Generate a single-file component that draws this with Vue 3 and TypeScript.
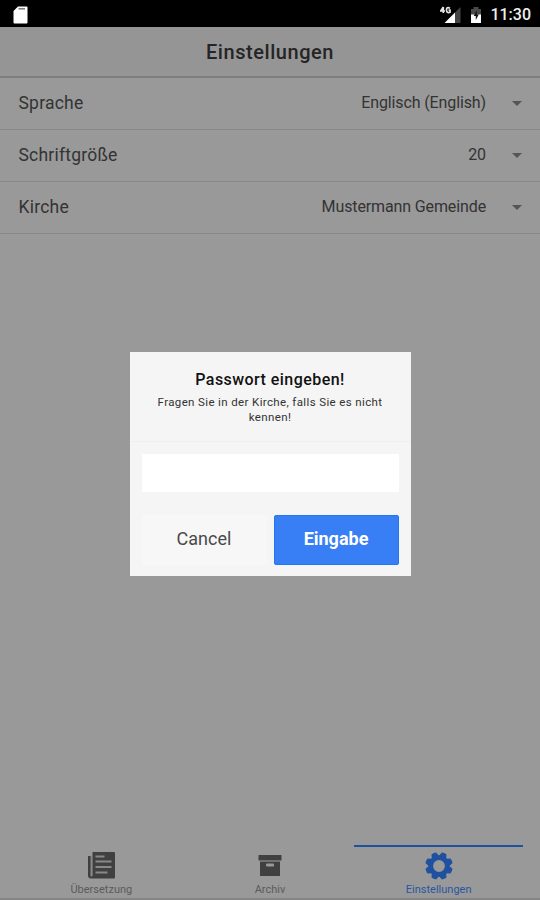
<script setup lang="ts">
interface Setting {
  label: string
  value: string
}

const settings: Setting[] = [
  { label: 'Sprache', value: 'Englisch (English)' },
  { label: 'Schriftgröße', value: '20' },
  { label: 'Kirche', value: 'Mustermann Gemeinde' },
]

const teeth: number[] = Array.from({ length: 8 }, (_, i) => 22.5 + i * 45)
</script>

<template>
  <div class="screen">
    <div class="status">
      <svg class="sd" width="15" height="18" viewBox="0 0 15 18">
        <path d="M5 .5h8.500q1 0 1 1v15q0 1-1 1h-12q-1 0-1-1V5z" fill="#fff" />
        <path d="M5.500 2.800h6.500" stroke="#777" stroke-width="1.500" />
      </svg>
      <div class="status-right">
        <svg width="22" height="18" viewBox="0 0 22 18">
          <path d="M20.500 1v16H15V6.500z" fill="#444" />
          <path d="M15 6.500V17H4.500z" fill="#fff" />
          <path d="M3.300 1v6M3.300 1 .7 5h4.300M10 2.200Q6.500.6 6.500 4T10 6.300V4H8.500" fill="none" stroke="#e4e4e4" stroke-width="1.700" />
        </svg>
        <svg class="battery" width="12" height="18" viewBox="0 0 12 18">
          <path d="M3.500 1h5v2H11v6H1V3h2.500z" fill="#4a4a4a" />
          <path d="M1 8.500h10V17H1z" fill="#fff" />
          <path d="M6.800 4.500 3.700 10h2.100v4l3-5.500h-2z" fill="#111" />
        </svg>
        <span class="clock">11:30</span>
      </div>
    </div>

    <header class="header"><h1>Einstellungen</h1></header>

    <main class="content">
      <div v-for="item in settings" :key="item.label" class="row">
        <span class="label">{{ item.label }}</span>
        <span class="value">{{ item.value }}</span>
        <span class="caret"></span>
      </div>
    </main>

    <nav class="tabs">
      <div class="tab">
        <svg width="28" height="28" viewBox="0 0 28 28">
          <path d="M5.500 0H27q1 0 1 1v24.500q0 1-1 1H4q-3 0-3-3V4h3v20h1.500z" fill="#404040" />
          <path d="M4.200 4v20.500" stroke="#888" stroke-width="1.300" />
          <path d="M8.500 4.500h9M8.500 9.500h16M8.500 15h16M8.500 20.500h12" stroke="#888" stroke-width="1.800" />
        </svg>
        <span>Übersetzung</span>
      </div>
      <div class="tab">
        <svg width="24" height="28" viewBox="0 0 24 28">
          <path d="M.5 3h23v5.500H.5z" fill="#404040" />
          <path d="M2 9.500h20V24H2z" fill="#404040" />
          <path d="M2 9h20" stroke="#777" stroke-width="1" />
          <rect x="8" y="11.500" width="8" height="3" rx="1" fill="#999" />
        </svg>
        <span>Archiv</span>
      </div>
      <div class="tab active">
        <svg width="28" height="28" viewBox="-14 -14 28 28">
          <circle r="8.300" fill="none" stroke="#1f51a0" stroke-width="4.800" />
          <path
            v-for="angle in teeth"
            :key="angle"
            d="M-3.900-9.500-2.500-13.500Q0-14.300 2.500-13.500L3.900-9.500z"
            :transform="`rotate(${angle})`"
            fill="#1f51a0"
          />
        </svg>
        <span>Einstellungen</span>
      </div>
    </nav>

    <div class="overlay">
      <section class="popup">
        <div class="popup-head">
          <h3>Passwort eingeben!</h3>
          <p>Fragen Sie in der Kirche, falls Sie es nicht kennen!</p>
        </div>
        <div class="popup-body"><input type="password" /></div>
        <div class="popup-buttons">
          <button class="cancel">Cancel</button>
          <button class="submit">Eingabe</button>
        </div>
      </section>
    </div>
  </div>
</template>

<style>
body {
  margin: 0;
}
</style>

<style scoped>
.screen {
  position: relative;
  box-sizing: border-box;
  width: 540px;
  height: 900px;
  display: flex;
  flex-direction: column;
  overflow: hidden;
  background: #999;
  border-bottom: 2px solid #858585;
  font-family: Roboto, sans-serif;
  color: #333;
}
.status {
  height: 27px;
  flex: none;
  box-sizing: border-box;
  padding: 2px 9px 0 13px;
  display: flex;
  align-items: center;
  justify-content: space-between;
  background: #000;
}
.status-right {
  display: flex;
  align-items: center;
}
.battery {
  margin: 0 8px 0 8px;
}
.clock {
  color: #eee;
  font-size: 16px;
  font-weight: 500;
  line-height: 20px;
}
.header {
  height: 51px;
  flex: none;
  box-sizing: border-box;
  border-bottom: 2px solid #7e7e7e;
  background: #959595;
  display: flex;
  align-items: center;
  justify-content: center;
}
h1 {
  margin: 0;
  font-size: 20px;
  font-weight: 500;
  letter-spacing: 0.55px;
  color: #252525;
}
.content {
  flex: 1;
}
.row {
  height: 52px;
  box-sizing: border-box;
  border-bottom: 1px solid #888;
  padding: 0 18px 0 18.500px;
  display: flex;
  align-items: center;
}
.label {
  flex: 1;
  font-size: 17.500px;
  letter-spacing: 0.22px;
  padding-bottom: 1px;
}
.value {
  font-size: 16px;
  letter-spacing: -0.12px;
  padding-bottom: 3px;
}
.caret {
  margin-left: 26px;
  border: 5px solid transparent;
  border-top: 5px solid #555;
  border-bottom: 0;
}
.tabs {
  flex: none;
  height: 53px;
  padding: 0 17px;
  display: flex;
}
.tab {
  flex: 1;
  box-sizing: border-box;
  border-top: 2px solid transparent;
  padding-top: 5px;
  display: flex;
  flex-direction: column;
  align-items: center;
  font-size: 11px;
  line-height: 13px;
  color: #5b5b5b;
}
.tab span {
  margin-top: 3px;
}
.tab.active {
  border-color: #1f51a0;
  color: #2b56a0;
}
.overlay {
  position: absolute;
  inset: 0;
  display: flex;
  align-items: flex-start;
  justify-content: center;
  padding-top: 352px;
}
.popup {
  width: 281px;
  height: 224px;
  background: #f5f5f5;
  display: flex;
  flex-direction: column;
}
.popup-head {
  height: 90px;
  box-sizing: border-box;
  border-bottom: 1px solid #efefef;
  padding: 18px 22px 0;
  text-align: center;
}
h3 {
  margin: 0;
  font-size: 16px;
  line-height: 19px;
  font-weight: 500;
  letter-spacing: 0.45px;
  color: #111;
}
p {
  margin: 6px 0 0;
  font-size: 11.500px;
  line-height: 15px;
  letter-spacing: 0.37px;
  color: #333;
}
.popup-body {
  height: 73px;
  box-sizing: border-box;
  padding: 12px 12px 0;
}
input {
  display: block;
  box-sizing: border-box;
  width: 100%;
  height: 38px;
  border: 0;
  padding: 0 8px;
  background: #fff;
}
.popup-buttons {
  padding: 0 12px;
  display: flex;
  gap: 7px;
}
button {
  flex: 1 1 0;
  box-sizing: border-box;
  height: 50px;
  padding: 0 0 3px;
  border: 1px solid transparent;
  border-radius: 2px;
  font-family: Roboto, sans-serif;
  font-size: 18px;
}
.cancel {
  background: #f7f7f7;
  color: #4a4a4a;
}
.submit {
  border-color: #2475f0;
  background: #387ef5;
  color: #fff;
  font-weight: 700;
}
</style>
